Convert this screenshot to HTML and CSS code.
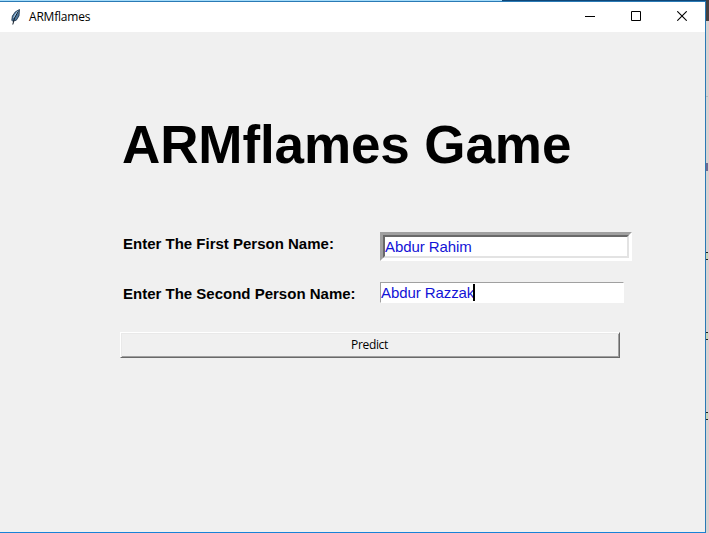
FILE: index.html
```html
<!DOCTYPE html>
<html lang="en">
<head>
<meta charset="utf-8">
<title>ARMflames</title>
<link rel="stylesheet" href="styles.css">
</head>
<body>
<div class="desktop">
  <div class="window">
    <header class="titlebar">
      <svg class="feather" width="11" height="16" viewBox="0 0 11 16">
        <path d="M9.5.5 5.4 2.8 2.4 7l-.6 4.2 1 1.1 3.5-1.1 2.7-4.3z" fill="#4e779c" stroke="#142b42" stroke-width=".8"/>
        <path d="M8 2.5 5.2 6.2 3.8 9" fill="none" stroke="#a8cbe6" stroke-width="1.5"/>
        <path d="M8.3 2.4 4.5 9 2.8 15.5" fill="none" stroke="#111b27" stroke-width="1"/>
      </svg>
      <span class="caption">ARMflames</span>
      <div class="controls">
        <svg width="10" height="10" viewBox="0 0 10 10"><path d="M0 5.5h10" stroke="#000"/></svg>
        <svg width="10" height="10" viewBox="0 0 10 10"><path d="M.5.5h9v9h-9z" fill="none" stroke="#000"/></svg>
        <svg width="10" height="10" viewBox="0 0 10 10"><path d="m.3.3 9.4 9.4m0-9.4L.3 9.7" stroke="#000" stroke-width="1.1"/></svg>
      </div>
    </header>
    <main class="client">
      <h1>ARMflames Game</h1>
      <div class="form-row first">
        <span class="label">Enter The First Person Name:</span>
        <div class="entry sunken"><div class="field">Abdur Rahim</div></div>
      </div>
      <div class="form-row second">
        <span class="label">Enter The Second Person Name:</span>
        <div class="entry thin">Abdur Razzak<i class="caret"></i></div>
      </div>
      <button class="predict" type="button">Predict</button>
    </main>
  </div>
  <div class="backdrop">
    <i class="line"></i><i class="letter"></i>
    <i class="marks one"></i><i class="marks two"></i><i class="marks three"></i>
  </div>
</div>
</body>
</html>
```
FILE: styles.css
```css
* { box-sizing: border-box; }
body { margin: 0; overflow: hidden; font-family: "Liberation Sans", Arial, sans-serif; }
.desktop {
  display: flex;
  width: 709px;
  height: 533px;
  padding-top: 1px;
  background: linear-gradient(90deg, #a5dcfa 502px, #0e4677 502px 706px, #46403f 706px);
}
.window {
  width: 706px;
  height: 532px;
  border: 1px solid #2a7ab5;
  border-left: 0;
  border-bottom-color: #1883d7;
  background: #f0f0f0;
}
.titlebar {
  display: flex;
  align-items: center;
  height: 30px;
  padding: 0 18px 0 10px;
  background: #fff;
}
.feather { margin-top: -1px; }
.caption {
  margin: 0 auto 0 8px;
  font: 12px/16px "Open Sans", sans-serif;
  letter-spacing: -0.2px;
}
.controls { display: flex; gap: 36px; margin-top: -2px; }
.controls svg { display: block; }
.client { padding: 83px 0 0 120px; }
h1 {
  height: 60px;
  margin: 0 0 0 2px;
  font-size: 53px;
  line-height: 60px;
  letter-spacing: -0.1px;
  white-space: nowrap;
}
.form-row { display: flex; }
.form-row.first { height: 50px; margin-top: 57px; }
.form-row.second { height: 50px; }
.label {
  width: 260px;
  padding: 3px 0 0 3px;
  font-size: 15px;
  font-weight: bold;
  line-height: 17px;
  white-space: nowrap;
}
.entry { color: #1313d6; font-size: 15px; letter-spacing: -0.08px; white-space: nowrap; }
.sunken {
  width: 252px;
  height: 29px;
  border: 3px solid;
  border-color: #a0a0a0 #fff #fff #a0a0a0;
}
.field {
  height: 23px;
  border: 2px solid;
  border-color: #696969 #e3e3e3 #e3e3e3 #696969;
  background: #fff;
  line-height: 19px;
}
.thin {
  display: flex;
  align-items: center;
  width: 244px;
  height: 21px;
  border: 1px solid;
  border-color: #a0a0a0 #fff #fff #a0a0a0;
  background: #fff;
}
.caret { width: 2px; height: 17px; background: #000; margin-left: -1px; }
.predict {
  display: block;
  width: 500px;
  height: 26px;
  padding: 0 1px 1px 0;
  border: 1px solid;
  border-color: #fff #696969 #696969 #fff;
  box-shadow: inset 1px 1px #e9e9e9, inset -1px -1px #a0a0a0;
  background: #f0f0f0;
  color: #000;
  font: 12px/16px "Open Sans", sans-serif;
  letter-spacing: -0.35px;
}
.backdrop {
  position: relative;
  flex: 1;
  overflow: hidden;
  background: linear-gradient(#46403f 20px, #d8d1d0 20px);
}
.backdrop i { position: absolute; left: 0; width: 2px; }
.line { top: 95px; height: 1px; background: #bcb5b5; }
.letter { top: 162px; height: 8px; background: #706890; }
.marks { height: 8px; border: solid #222; border-width: 1px 0; background: #cbd0b4; }
.one { top: 251px; }
.two { top: 331px; }
.three { top: 411px; }
```
